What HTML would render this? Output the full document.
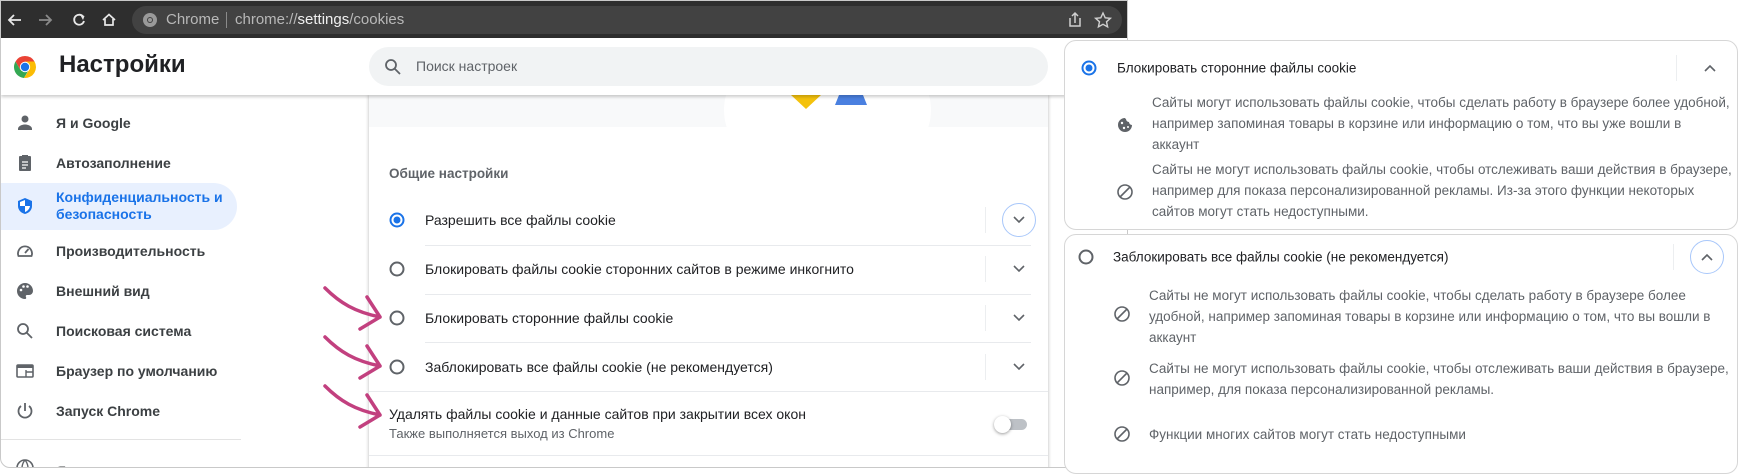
<!DOCTYPE html>
<html><head><meta charset="utf-8"><style>
*{box-sizing:border-box;margin:0;padding:0}
body{width:1738px;height:475px;background:#fff;position:relative;overflow:hidden;font-family:"Liberation Sans","Noto Sans CJK SC",sans-serif;color:#202124}
.a{position:absolute}
.win{left:0;top:0;width:1128px;height:468px;border:1px solid #c9c9c9;border-radius:0 0 10px 10px;overflow:hidden;background:#fff;z-index:0}
.top{left:0;top:0;width:1128px;height:37px;background:#2e2e2e}
.pill{left:131px;top:5px;width:990px;height:28px;border-radius:14px;background:#424242}
.hdr{left:0;top:37px;width:1128px;height:57px;background:#fff;box-shadow:0 2px 3px rgba(0,0,0,.2);z-index:3}
.srch{left:368px;top:9px;width:679px;height:39px;border-radius:20px;background:#f1f3f4}
.nav{left:55px;font-size:14px;font-weight:bold;color:#3c4043;white-space:nowrap;transform:translateY(-50%)}
.ic{left:14px;transform:translateY(-50%)}
.card{left:368px;top:94px;width:679px;height:380px;background:#fff;overflow:hidden;box-shadow:-1px 0 3px rgba(0,0,0,.15),1px 0 3px rgba(0,0,0,.15)}
.row{font-size:14px;color:#202124;white-space:nowrap;transform:translateY(-50%)}
.rad{width:15px;height:15px;border:2px solid #5f6368;border-radius:50%;transform:translate(-50%,-50%)}
.rad.on{border-color:#1a73e8}
.rad.on::after{content:"";position:absolute;left:2px;top:2px;width:7px;height:7px;border-radius:50%;background:#1a73e8}
.sep{height:1px;background:#e8eaed}
.vs{width:1px;height:26px;background:#eceef0;transform:translateY(-50%)}
.chev{transform:translate(-50%,-50%)}
.panel{border:1px solid #d6d6d6;border-radius:12px;background:#fff}
.t{font-size:13.5px;color:#5f6368;white-space:nowrap;line-height:21px}
.rp{z-index:5}
</style></head><body>
<div class="a win">
 <div class="a top"></div>
 <svg class="a" style="left:5px;top:10px" width="120" height="18" viewBox="0 0 120 18">
  <path d="M15 9H3M8 4L3 9l5 5" fill="none" stroke="#e8e8e8" stroke-width="1.8"/>
  <path d="M33 9h12M40 4l5 5-5 5" fill="none" stroke="#8a8a8a" stroke-width="1.8"/>
  <path d="M77 5.5A5 5 0 1 0 78 10" fill="none" stroke="#e8e8e8" stroke-width="1.8"/><path d="M74 3.5l4.5 1.5-1.5 4z" fill="#e8e8e8"/>
  <path d="M97 9l6-5.5 6 5.5M99 8v6h8V8" fill="none" stroke="#e8e8e8" stroke-width="1.7"/>
 </svg>
 <div class="a pill"></div>
 <svg class="a" style="left:141px;top:11px" width="16" height="16" viewBox="0 0 16 16"><circle cx="8" cy="8" r="7" fill="#9a9a9a"/><circle cx="8" cy="8" r="3" fill="#424242"/><circle cx="8" cy="8" r="2" fill="#9a9a9a"/></svg>
 <div class="a" style="left:165px;top:10px;font-size:15px;color:#b8b8b8;white-space:nowrap">Chrome</div>
 <div class="a" style="left:225px;top:11px;width:1px;height:16px;background:#8a8a8a"></div>
 <div class="a" style="left:234px;top:10px;font-size:15px;color:#b8b8b8;white-space:nowrap">chrome://<span style="color:#f0f0f0">settings</span>/cookies</div>
 <svg class="a" style="left:1064px;top:10px" width="50" height="18" viewBox="0 0 50 18"><path d="M5 7v8h10V7M10 12V2M7 5l3-3 3 3" fill="none" stroke="#cfcfcf" stroke-width="1.5"/><path d="M38 2l2.2 4.8 5.2.5-3.9 3.5 1.1 5.1L38 13.3l-4.6 2.6 1.1-5.1-3.9-3.5 5.2-.5z" fill="none" stroke="#cfcfcf" stroke-width="1.4"/></svg>
 <div class="a hdr">
  <svg class="a" style="left:12px;top:17px" width="24" height="24" viewBox="0 0 24 24"><path d="M12 1A11 11 0 0 0 2.5 6.5L7.3 14.8 12 6.5h9.5A11 11 0 0 0 12 1z" fill="#ea4335"/><path d="M2.5 6.5A11 11 0 0 0 11 23l4.8-8.3-8.5.1z" fill="#34a853"/><path d="M21.5 6.5H12l4 8.5-5 8A11 11 0 0 0 21.5 6.5z" fill="#fbbc04"/><circle cx="12" cy="12" r="5.2" fill="#fff"/><circle cx="12" cy="12" r="4.2" fill="#1a73e8"/></svg>
  <div class="a" style="left:58px;top:13px;font-size:24px;font-weight:bold;color:#202124">Настройки</div>
  <div class="a srch">
   <svg class="a" style="left:15px;top:11px" width="18" height="18" viewBox="0 0 18 18"><circle cx="7" cy="7" r="5" fill="none" stroke="#5f6368" stroke-width="1.8"/><path d="M11 11l5 5" stroke="#5f6368" stroke-width="1.8"/></svg>
   <div class="a" style="left:47px;top:11px;font-size:14px;color:#5f6368">Поиск настроек</div>
  </div>
 </div>
 <div class="a" style="left:0;top:182px;width:236px;height:47px;background:#e8f0fe;border-radius:0 24px 24px 0"></div>
 <svg class="a ic" style="top:122px" width="20" height="20" viewBox="0 0 20 20"><circle cx="10" cy="6" r="3.5" fill="#5f6368"/><path d="M3 16c0-3 4-4.5 7-4.5s7 1.5 7 4.5v1H3z" fill="#5f6368"/></svg>
 <div class="a nav" style="top:122px">Я и Google</div>
 <svg class="a ic" style="top:162px" width="20" height="20" viewBox="0 0 20 20"><rect x="4" y="3" width="12" height="15" rx="1" fill="#5f6368"/><rect x="7" y="2" width="6" height="3" fill="#5f6368"/><path d="M7 9h6M7 12h6M7 15h4" stroke="#fff" stroke-width="1.3"/></svg>
 <div class="a nav" style="top:162px">Автозаполнение</div>
 <svg class="a ic" style="top:205px" width="20" height="20" viewBox="0 0 20 20"><path d="M10 2l7 3v5c0 4-3 7-7 8-4-1-7-4-7-8V5z" fill="#1a73e8"/><path d="M10 4v6H5V6zM10 10h5c-.5 3-2.5 5-5 6z" fill="#fff"/></svg>
 <div class="a nav" style="top:205px;color:#1a73e8;line-height:17px">Конфиденциальность и<br>безопасность</div>
 <svg class="a ic" style="top:250px" width="20" height="20" viewBox="0 0 20 20"><path d="M3.5 15a7 7 0 1 1 13 0z" fill="none" stroke="#5f6368" stroke-width="1.8"/><path d="M10 12l3.5-4" stroke="#5f6368" stroke-width="1.8"/></svg>
 <div class="a nav" style="top:250px">Производительность</div>
 <svg class="a ic" style="top:290px" width="20" height="20" viewBox="0 0 20 20"><path d="M10 2a8 8 0 0 0 0 16c1.2 0 1.5-1 1-2-.6-1 0-2 1.2-2H14a4 4 0 0 0 4-4c0-4.5-3.5-8-8-8z" fill="#5f6368"/><circle cx="6" cy="9" r="1.3" fill="#fff"/><circle cx="8.5" cy="5.5" r="1.3" fill="#fff"/><circle cx="12.5" cy="5.5" r="1.3" fill="#fff"/></svg>
 <div class="a nav" style="top:290px">Внешний вид</div>
 <svg class="a ic" style="top:330px" width="20" height="20" viewBox="0 0 20 20"><circle cx="8" cy="8" r="5" fill="none" stroke="#5f6368" stroke-width="1.8"/><path d="M12 12l5 5" stroke="#5f6368" stroke-width="1.8"/></svg>
 <div class="a nav" style="top:330px">Поисковая система</div>
 <svg class="a ic" style="top:370px" width="20" height="20" viewBox="0 0 20 20"><rect x="2" y="4" width="16" height="12" rx="1" fill="none" stroke="#5f6368" stroke-width="1.6"/><rect x="2" y="4" width="16" height="3" fill="#5f6368"/><path d="M11 9v7M11 11h7" stroke="#5f6368" stroke-width="1.4"/></svg>
 <div class="a nav" style="top:370px">Браузер по умолчанию</div>
 <svg class="a ic" style="top:410px" width="20" height="20" viewBox="0 0 20 20"><path d="M10 2v8" stroke="#5f6368" stroke-width="1.8"/><path d="M6 5a6.5 6.5 0 1 0 8 0" fill="none" stroke="#5f6368" stroke-width="1.8"/></svg>
 <div class="a nav" style="top:410px">Запуск Chrome</div>
 <div class="a" style="left:0;top:438px;width:240px;height:1px;background:#e3e3e3"></div>
 <svg class="a" style="left:14px;top:457px" width="20" height="20" viewBox="0 0 20 20"><circle cx="10" cy="10" r="8" fill="none" stroke="#5f6368" stroke-width="1.6"/><path d="M2 10h16M10 2c-4 5-4 11 0 16M10 2c4 5 4 11 0 16" fill="none" stroke="#5f6368" stroke-width="1.4"/></svg>
 <div class="a nav" style="top:470px">Языки</div>
 <div class="a card">
  <div class="a" style="left:0;top:0;width:679px;height:32px;background:#f8f9fa"></div>
  <div class="a" style="left:355px;top:-60px;width:207px;height:150px;border-radius:50%;background:#fff"></div>
  <svg class="a" style="left:420px;top:0" width="80" height="16" viewBox="0 0 80 16"><path d="M2 0h30l-15 14z" fill="#f4c20d"/><path d="M50 0h24l4 10H46z" fill="#4a80e0"/></svg>
 </div>
 <div class="a" style="left:388px;top:165px;font-size:13.5px;font-weight:bold;color:#5f6368">Общие настройки</div>

 <div class="a rad on" style="left:396px;top:219px"></div>
 <div class="a row" style="left:424px;top:219px">Разрешить все файлы cookie</div>
 <div class="a sep" style="left:424px;top:244px;width:606px"></div>
 <div class="a rad" style="left:396px;top:268px"></div>
 <div class="a row" style="left:424px;top:268px">Блокировать файлы cookie сторонних сайтов в режиме инкогнито</div>
 <div class="a sep" style="left:424px;top:293px;width:606px"></div>
 <div class="a rad" style="left:396px;top:317px"></div>
 <div class="a row" style="left:424px;top:317px">Блокировать сторонние файлы cookie</div>
 <div class="a sep" style="left:424px;top:341px;width:606px"></div>
 <div class="a rad" style="left:396px;top:366px"></div>
 <div class="a row" style="left:424px;top:366px">Заблокировать все файлы cookie (не рекомендуется)</div>
 <div class="a sep" style="left:368px;top:390px;width:679px"></div>
 <div class="a vs" style="left:984px;top:219px"></div>
 <div class="a vs" style="left:984px;top:268px"></div>
 <div class="a vs" style="left:984px;top:317px"></div>
 <div class="a vs" style="left:984px;top:366px"></div>
 <div class="a" style="left:1001px;top:202px;width:34px;height:34px;border:1.5px solid #a8c7fa;border-radius:50%"></div>
 <svg class="a chev" style="left:1018px;top:219px" width="12" height="8" viewBox="0 0 12 8"><path d="M1 1l5 5 5-5" fill="none" stroke="#5f6368" stroke-width="1.6"/></svg>
 <svg class="a chev" style="left:1018px;top:268px" width="12" height="8" viewBox="0 0 12 8"><path d="M1 1l5 5 5-5" fill="none" stroke="#5f6368" stroke-width="1.6"/></svg>
 <svg class="a chev" style="left:1018px;top:317px" width="12" height="8" viewBox="0 0 12 8"><path d="M1 1l5 5 5-5" fill="none" stroke="#5f6368" stroke-width="1.6"/></svg>
 <svg class="a chev" style="left:1018px;top:366px" width="12" height="8" viewBox="0 0 12 8"><path d="M1 1l5 5 5-5" fill="none" stroke="#5f6368" stroke-width="1.6"/></svg>
 <div class="a" style="left:388px;top:405px;font-size:14px;color:#202124;white-space:nowrap">Удалять файлы cookie и данные сайтов при закрытии всех окон</div>
 <div class="a" style="left:388px;top:425px;font-size:13px;color:#5f6368;white-space:nowrap">Также выполняется выход из Chrome</div>
 <div class="a" style="left:998px;top:418px;width:28px;height:11px;border-radius:6px;background:#bdc1c6"></div>
 <div class="a" style="left:993px;top:415px;width:17px;height:17px;border-radius:50%;background:#fff;box-shadow:0 1px 3px rgba(0,0,0,.4)"></div>
 <div class="a sep" style="left:368px;top:454px;width:679px"></div>
</div>
<svg class="a" style="left:0;top:0;z-index:4" width="400" height="475" viewBox="0 0 400 475">
 <g fill="none" stroke="#c2407f" stroke-width="3.5" stroke-linecap="round" stroke-linejoin="round">
  <path d="M325 288c15 15 30 24 55 29M367 297l13 20-20 12"/>
  <path d="M325 337c15 15 30 24 55 29M367 346l13 20-20 12"/>
  <path d="M325 386c15 15 30 24 55 29M367 395l13 20-20 12"/>
 </g>
</svg>
<div class="a rp" style="left:0;top:0;width:1738px;height:475px">
<div class="a panel" style="left:1064px;top:40px;width:674px;height:190px"></div>
<div class="a rad on" style="left:1089px;top:68px"></div>
<div class="a row" style="left:1117px;top:68px;font-size:13.5px">Блокировать сторонние файлы cookie</div>
<div class="a vs" style="left:1676px;top:68px"></div>
<svg class="a chev" style="left:1710px;top:68px" width="12" height="8" viewBox="0 0 12 8"><path d="M1 7l5-5 5 5" fill="none" stroke="#5f6368" stroke-width="1.6"/></svg>
<svg class="a" style="left:1116px;top:116px" width="18" height="18" viewBox="0 0 18 18"><path d="M9 2a7 7 0 1 0 7 7 3 3 0 0 1-3-3 3 3 0 0 1-3-3 1.5 1.5 0 0 1-1-1z" fill="#5f6368"/><circle cx="6" cy="7" r="1.2" fill="#fff"/><circle cx="8" cy="12" r="1.2" fill="#fff"/><circle cx="12" cy="11" r="1" fill="#fff"/></svg>
<div class="a t" style="left:1152px;top:92px">Сайты могут использовать файлы cookie, чтобы сделать работу в браузере более удобной,<br>например запоминая товары в корзине или информацию о том, что вы уже вошли в<br>аккаунт</div>
<svg class="a" style="left:1116px;top:183px" width="18" height="18" viewBox="0 0 18 18"><circle cx="9" cy="9" r="7" fill="none" stroke="#5f6368" stroke-width="1.6"/><path d="M4 14L14 4" stroke="#5f6368" stroke-width="1.6"/></svg>
<div class="a t" style="left:1152px;top:159px">Сайты не могут использовать файлы cookie, чтобы отслеживать ваши действия в браузере,<br>например для показа персонализированной рекламы. Из-за этого функции некоторых<br>сайтов могут стать недоступными.</div>
<div class="a panel" style="left:1064px;top:234px;width:674px;height:240px"></div>
<div class="a rad" style="left:1086px;top:257px"></div>
<div class="a row" style="left:1113px;top:257px;font-size:13.5px">Заблокировать все файлы cookie (не рекомендуется)</div>
<div class="a vs" style="left:1673px;top:257px"></div>
<div class="a" style="left:1690px;top:240px;width:34px;height:34px;border:1.5px solid #a8c7fa;border-radius:50%"></div>
<svg class="a chev" style="left:1707px;top:257px" width="12" height="8" viewBox="0 0 12 8"><path d="M1 7l5-5 5 5" fill="none" stroke="#5f6368" stroke-width="1.6"/></svg>
<svg class="a" style="left:1113px;top:305px" width="18" height="18" viewBox="0 0 18 18"><circle cx="9" cy="9" r="7" fill="none" stroke="#5f6368" stroke-width="1.6"/><path d="M4 14L14 4" stroke="#5f6368" stroke-width="1.6"/></svg>
<div class="a t" style="left:1149px;top:285px">Сайты не могут использовать файлы cookie, чтобы сделать работу в браузере более<br>удобной, например запоминая товары в корзине или информацию о том, что вы вошли в<br>аккаунт</div>
<svg class="a" style="left:1113px;top:369px" width="18" height="18" viewBox="0 0 18 18"><circle cx="9" cy="9" r="7" fill="none" stroke="#5f6368" stroke-width="1.6"/><path d="M4 14L14 4" stroke="#5f6368" stroke-width="1.6"/></svg>
<div class="a t" style="left:1149px;top:358px">Сайты не могут использовать файлы cookie, чтобы отслеживать ваши действия в браузере,<br>например, для показа персонализированной рекламы.</div>
<svg class="a" style="left:1113px;top:425px" width="18" height="18" viewBox="0 0 18 18"><circle cx="9" cy="9" r="7" fill="none" stroke="#5f6368" stroke-width="1.6"/><path d="M4 14L14 4" stroke="#5f6368" stroke-width="1.6"/></svg>
<div class="a t" style="left:1149px;top:424px">Функции многих сайтов могут стать недоступными</div>
</div>
</body></html>
